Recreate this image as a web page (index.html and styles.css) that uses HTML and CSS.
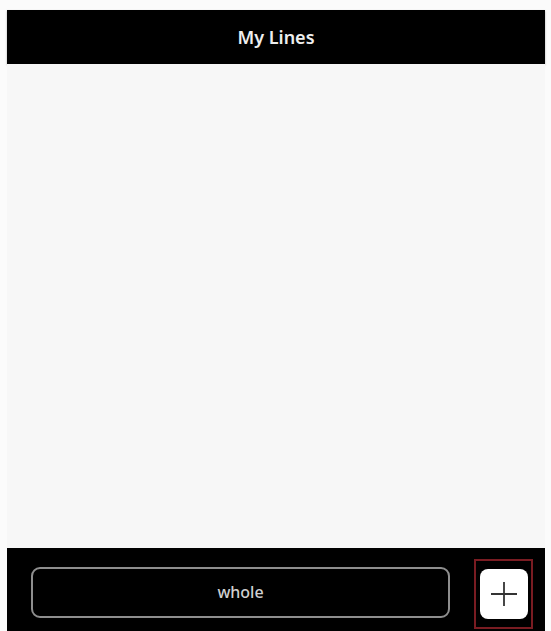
FILE: index.html
```html
<!DOCTYPE html>
<html>
<head>
<meta charset="utf-8">
<link rel="stylesheet" href="styles.css">
</head>
<body>
<div class="app">
  <header class="topbar"><h1 class="title">My Lines</h1></header>
  <main class="content"></main>
  <footer class="bottombar">
    <button class="whole">whole</button>
    <div class="add-frame">
      <button class="add" aria-label="add">
        <svg width="28" height="28" viewBox="0 0 28 28"><path d="M14 2V26M1 14H27" stroke="#333" stroke-width="1.8" fill="none"/></svg>
      </button>
    </div>
  </footer>
</div>
</body>
</html>
```
FILE: styles.css
```css
html, body { margin: 0; padding: 0; }
body {
  background: #fbfbfb;
  font-family: "Noto Sans", "Open Sans", sans-serif;
}
.app {
  height: 631px;
  display: flex;
  flex-direction: column;
  padding: 10px 6px 0 7px;
  box-sizing: border-box;
}
.topbar {
  height: 54px;
  background: #000;
  display: flex;
  align-items: center;
  justify-content: center;
  box-shadow: 0 1px 2px rgba(0,0,0,0.3);
}
.title {
  margin: 0;
  color: #eee;
  font-size: 18px;
  font-weight: 600;
}
.content {
  flex: 1;
  background: #f7f7f7;
}
.bottombar {
  height: 83px;
  background: #000;
  display: flex;
  align-items: center;
  padding: 0 11px 0 24px;
  gap: 24px;
}
.whole {
  width: 419px;
  height: 51px;
  margin-top: 5px;
  background: #000;
  border: 2px solid #8e8e8e;
  border-radius: 9px;
  color: #d0d0d0;
  font-family: "Noto Sans", sans-serif;
  font-size: 16px;
  font-weight: 500;
}
.add-frame {
  width: 59px;
  height: 70px;
  box-sizing: border-box;
  border: 2px solid #7a1c22;
  display: flex;
  align-items: center;
  justify-content: center;
  margin-top: 8px;
}
.add {
  width: 48px;
  height: 50px;
  background: #fff;
  border: none;
  border-radius: 8px;
  padding: 0;
  display: flex;
  align-items: center;
  justify-content: center;
}
```
